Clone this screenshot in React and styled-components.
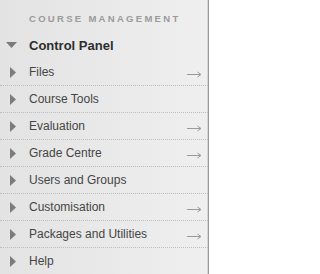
import React from "react";
import styled, { createGlobalStyle } from "styled-components";

const Global = createGlobalStyle`
  html, body { margin: 0; padding: 0; }
  body { font-family: "Liberation Sans", Arial, sans-serif; }
`;

const Panel = styled.nav`
  width: 209px;
  height: 274px;
  box-sizing: border-box;
  background: linear-gradient(to right, #e3e3e3, #efefef);
  border-right: 1px solid #9a9a9a;
  box-shadow: inset -1px 0 0 #d6d6d6;
  display: flex;
  flex-direction: column;
  overflow: hidden;
`;

const Header = styled.div`
  height: 32px;
  display: flex;
  align-items: center;
  padding-left: 29px;
  padding-top: 4px;
  box-sizing: border-box;
  font-size: 9.5px;
  font-weight: bold;
  letter-spacing: 2.3px;
  color: #9a9a9a;
  white-space: nowrap;
`;

const Title = styled.div`
  height: 27px;
  display: flex;
  align-items: center;
  padding-bottom: 1px;
  box-sizing: border-box;
  font-size: 13px;
  font-weight: bold;
  color: #2e2e2e;
  position: relative;
  padding-left: 29px;
`;

const Row = styled.div`
  height: 26px;
  display: flex;
  align-items: center;
  padding-left: 29px;
  padding-right: 6px;
  font-size: 12px;
  color: #454545;
  border-bottom: ${(p) => (p.$last ? "none" : "1px dotted #bdbdbd")};
  position: relative;
`;

const Label = styled.span`
  flex: 1;
  white-space: nowrap;
`;

const TriangleRight = styled.svg`
  position: absolute;
  left: 10px;
  top: 8px;
`;

const TriangleDown = styled.svg`
  position: absolute;
  left: 6px;
  top: 10px;
`;

const Arrow = styled.svg`
  margin-top: 4px;
  flex: none;
`;

const items = [
  { label: "Files", arrow: true },
  { label: "Course Tools" },
  { label: "Evaluation", arrow: true },
  { label: "Grade Centre", arrow: true },
  { label: "Users and Groups" },
  { label: "Customisation", arrow: true },
  { label: "Packages and Utilities", arrow: true },
  { label: "Help" },
];

export default function App() {
  return (
    <>
      <Global />
      <Panel>
        <Header>COURSE MANAGEMENT</Header>
        <Title>
          <TriangleDown width="11" height="6" viewBox="0 0 11 6">
            <polygon points="0,0 11,0 5.5,6" fill="#7a7a7a" />
          </TriangleDown>
          Control Panel
        </Title>
        {items.map((it, i) => (
          <Row key={it.label} $last={i === items.length - 1}>
            <TriangleRight width="6" height="11" viewBox="0 0 6 11">
              <polygon points="0,0 6,5.5 0,11" fill="#7c7c7c" />
            </TriangleRight>
            <Label>{it.label}</Label>
            {it.arrow && (
              <Arrow width="15" height="7" viewBox="0 0 15 7">
                <line x1="0" y1="3.5" x2="13" y2="3.5" stroke="#9a9a9a" strokeWidth="1" />
                <polyline points="10.5,1 14,3.5 10.5,6" fill="none" stroke="#9a9a9a" strokeWidth="1" />
              </Arrow>
            )}
          </Row>
        ))}
      </Panel>
    </>
  );
}
